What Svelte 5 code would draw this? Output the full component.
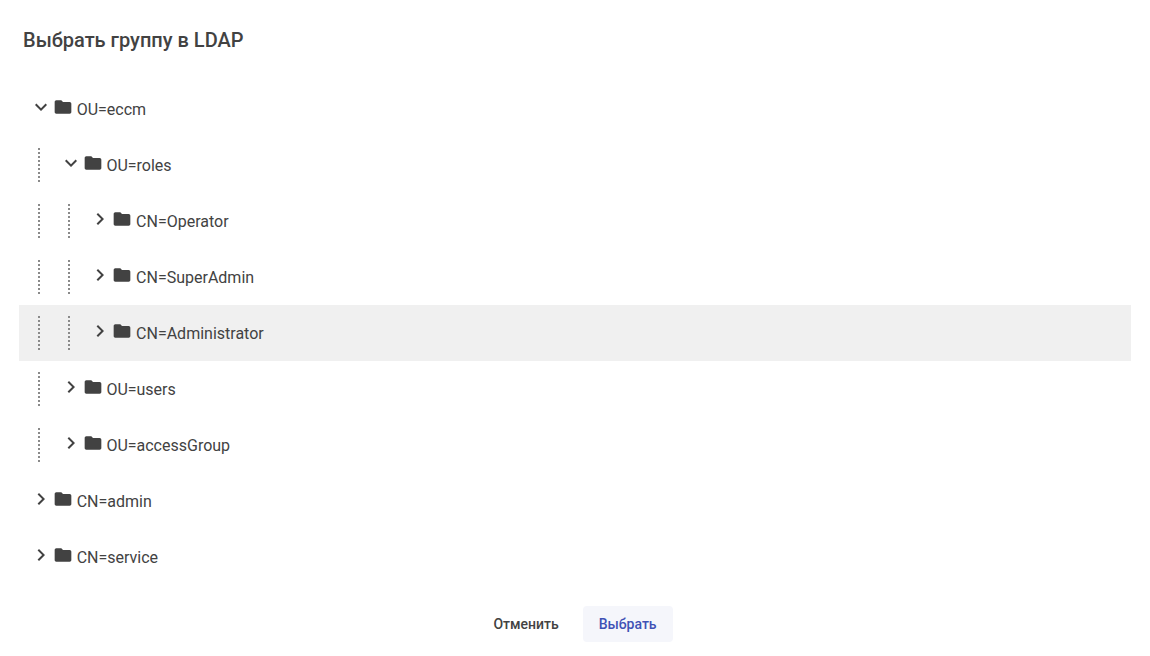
<script>
  const rows = [
    { label: 'OU=eccm', depth: 0, open: true },
    { label: 'OU=roles', depth: 1, open: true },
    { label: 'CN=Operator', depth: 2 },
    { label: 'CN=SuperAdmin', depth: 2 },
    { label: 'CN=Administrator', depth: 2, active: true },
    { label: 'OU=users', depth: 1 },
    { label: 'OU=accessGroup', depth: 1 },
    { label: 'CN=admin', depth: 0 },
    { label: 'CN=service', depth: 0 }
  ];
</script>

<div class="dialog">
  <h2>Выбрать группу в LDAP</h2>
  <div class="tree">
    {#each rows as row}
      <div class="row" class:active={row.active}>
        {#each Array(row.depth) as _}
          <span class="indent"><i></i></span>
        {/each}
        <svg class="chev" viewBox="0 0 24 24" width="24" height="24">
          {#if row.open}
            <path d="M7.41 8.59 12 13.17l4.59-4.58L18 10l-6 6-6-6z" />
          {:else}
            <path d="M8.59 16.59 13.17 12 8.59 7.41 10 6l6 6-6 6z" />
          {/if}
        </svg>
        <svg class="folder" viewBox="0 0 24 24" width="20" height="20">
          <path d="M10 4H4c-1.1 0-2 .9-2 2v12c0 1.1.9 2 2 2h16c1.100 0 2-.9 2-2V8c0-1.100-.9-2-2-2h-8l-2-2z" />
        </svg>
        <span class="label">{row.label}</span>
      </div>
    {/each}
  </div>
  <div class="actions">
    <button class="cancel">Отменить</button>
    <button class="ok">Выбрать</button>
  </div>
</div>

<style>
  :global(body) {
    margin: 0;
    background: #fff;
  }
  .dialog {
    width: 1150px;
    height: 656px;
    box-sizing: border-box;
    padding: 24px 19px 0;
    font-family: Roboto, sans-serif;
    color: #424242;
    display: flex;
    flex-direction: column;
    overflow: hidden;
  }
  h2 {
    margin: 0 0 0 4px;
    font-size: 20px;
    font-weight: 500;
    line-height: 32px;
    color: #424242;
  }
  .tree {
    margin-top: 25px;
    display: flex;
    flex-direction: column;
  }
  .row {
    height: 56px;
    display: flex;
    align-items: center;
    padding-left: 10px;
    font-size: 16px;
    width: 1112px;
    box-sizing: border-box;
  }
  .row.active {
    background: #f0f0f0;
  }
  .indent {
    width: 29.7px;
    height: 100%;
    flex: none;
    display: flex;
    align-items: center;
  }
  .indent i {
    display: block;
    margin-left: 9px;
    height: 34px;
    width: 2px;
    background: repeating-linear-gradient(to bottom, #8a8a8a 0 2px, transparent 2px 4px);
  }
  .chev {
    flex: none;
    fill: #424242;
    margin-top: -4px;
  }
  .folder {
    flex: none;
    fill: #424242;
    margin: -5px 0 0 0;
  }
  .label {
    margin: 2px 0 0 3.7px;
    line-height: 24px;
  }
  .actions {
    margin-top: 21px;
    display: flex;
    justify-content: center;
    gap: 8px;
  }
  button {
    font-family: Roboto, sans-serif;
    font-size: 14px;
    font-weight: 500;
    height: 36px;
    border: 0;
    border-radius: 4px;
    padding: 0 16px;
    background: transparent;
    cursor: pointer;
  }
  .cancel {
    color: #424242;
  }
  .ok {
    color: #3f51b5;
    background: #f5f6fb;
  }
</style>
